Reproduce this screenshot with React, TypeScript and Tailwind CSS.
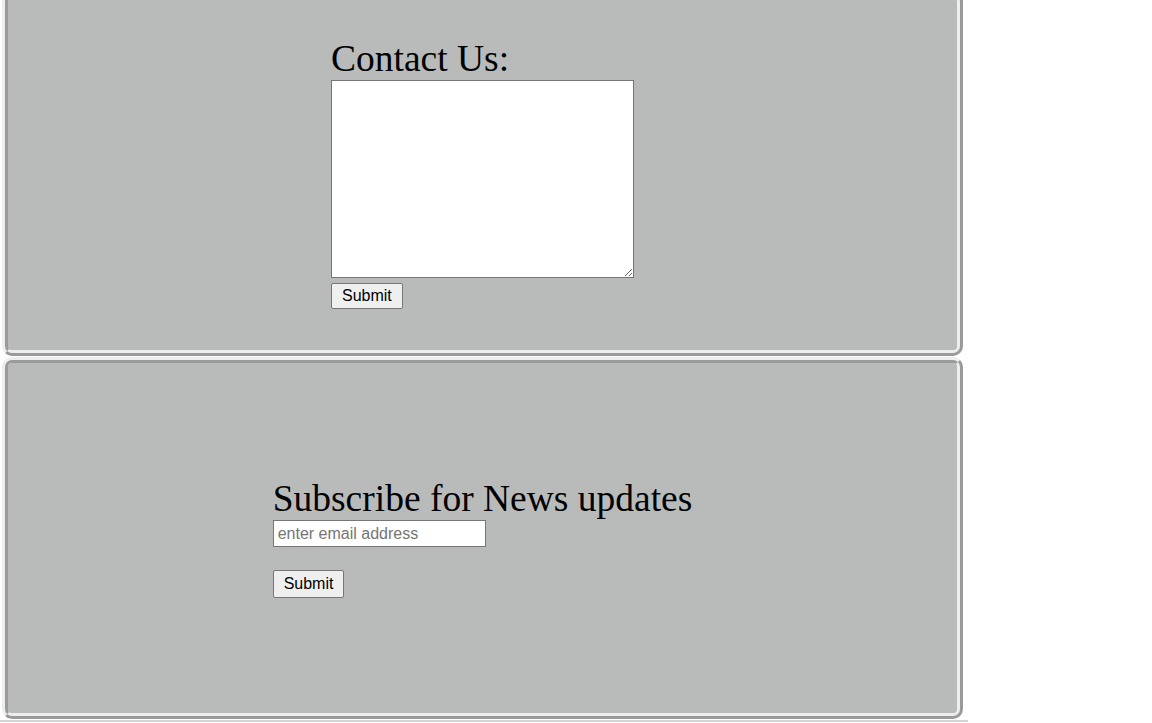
export default function App() {
  return (
    <div className="w-[968px] -mt-[8px] font-['Liberation_Serif',serif]">
      {/* Contact box */}
      <section className="ml-[2px] flex h-[364px] w-[961px] items-center justify-center rounded-[10px] border-[6px] border-[#eeeeee] bg-[#b8bbba] pb-[2px] [border-style:ridge]">
        <div className="flex flex-col items-start">
          <h2 className="text-[37.5px] leading-[41px] text-black">Contact Us:</h2>
          <textarea className="mt-px h-[198px] w-[303px] border border-[#767676] bg-white p-[2px]" />
          <button className="mt-[5px] h-[26px] rounded-[2px] border border-[#767676] bg-[#efefef] px-[10px] font-['Liberation_Sans',sans-serif] text-[16px] text-black">
            Submit
          </button>
        </div>
      </section>

      {/* Subscribe box */}
      <section className="ml-[2px] mt-px flex h-[362px] w-[961px] items-center justify-center rounded-[10px] border-[6px] border-[#eeeeee] bg-[#b8bbba] [border-style:ridge]">
        <div className="flex flex-col items-start">
          <h2 className="text-[37.5px] leading-[41px] text-black">Subscribe for News updates</h2>
          <input
            type="email"
            placeholder="enter email address"
            className="mt-px h-[27px] w-[213px] border border-[#767676] bg-white px-[4px] font-['Liberation_Sans',sans-serif] text-[16px] text-black placeholder:text-[#757575]"
          />
          <button className="mt-[23px] h-[28px] rounded-[2px] border border-[#767676] bg-[#efefef] px-[10px] font-['Liberation_Sans',sans-serif] text-[16px] text-black">
            Submit
          </button>
        </div>
      </section>

      <div className="mt-px h-[2px] w-[968px] bg-[#d6d6d6]" />
    </div>
  );
}
